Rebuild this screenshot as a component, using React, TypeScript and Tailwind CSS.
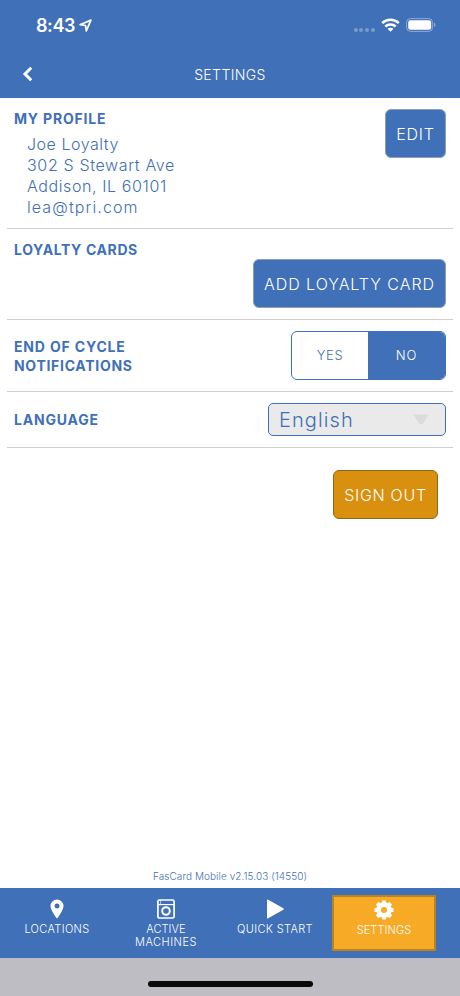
import type { ReactNode } from "react";

const profileLines = [
  { text: "Joe Loyalty", style: "tracking-[0.53px]" },
  { text: "302 S Stewart Ave", style: "tracking-[0.65px]" },
  { text: "Addison, IL 60101", style: "tracking-[0.6px]" },
  { text: "lea@tpri.com", style: "tracking-[1.1px]" },
];

function StatusBar() {
  return (
    <div className="flex h-[50px] items-center justify-between pl-9 pr-[24px] pt-px text-white">
      <div className="flex items-center gap-1">
        <span className="text-[18px] font-semibold leading-none tracking-[-0.4px]">8:43</span>
        <svg width="13" height="13" viewBox="0 0 13 13" fill="none" stroke="currentColor" strokeWidth="1.7" strokeLinejoin="round">
          <path d="M1.1 5.7L11.9 1.1L7.3 11.9L6.5 6.5Z" />
        </svg>
      </div>
      <div className="flex items-center">
        <div className="mr-[6px] mt-[9px] flex gap-[1.8px]">
          {[0, 1, 2, 3].map((dot) => (
            <span key={dot} className="size-[4px] rounded-full bg-white/30" />
          ))}
        </div>
        <svg className="mb-px mr-[6px]" width="19" height="14" viewBox="0 0 19 14" fill="none" stroke="currentColor" strokeWidth="2.6">
          <path d="M1.2 5.1C5.9 0.7 13.1 0.7 17.8 5.1" />
          <path d="M4.3 8.5C7.2 5.8 11.8 5.8 14.7 8.5" />
          <path d="M9.5 13.7L6.5 10.8C8.2 9.3 10.8 9.3 12.5 10.8Z" fill="currentColor" stroke="none" />
        </svg>
        <svg className="mb-px" width="30" height="14" viewBox="0 0 30 14">
          <rect x="0.6" y="0.6" width="26" height="12.8" rx="4" fill="none" stroke="white" strokeOpacity="0.4" />
          <rect x="2.2" y="2.2" width="23" height="9.6" rx="2.3" fill="white" />
          <path d="M28 4.8C29.9 5.4 29.9 8.6 28 9.2Z" fill="white" fillOpacity="0.4" />
        </svg>
      </div>
    </div>
  );
}

function NavItem({ icon, children, active }: { icon: ReactNode; children: ReactNode; active?: boolean }) {
  return (
    <div
      className={`flex h-[56px] w-[104px] flex-col items-center whitespace-nowrap text-center text-[11px] font-light leading-[13px] text-white ${
        active ? "border-2 border-[#b98420] bg-[#f7aa25] pt-[3px]" : "pt-1"
      }`}
    >
      <div className="mb-1 flex h-5 items-center">{icon}</div>
      {children}
    </div>
  );
}

export default function App() {
  return (
    <div className="flex h-[996px] w-[460px] flex-col overflow-hidden bg-white font-[Inter,sans-serif] text-[#4070b7]">
      <header className="h-[98px] bg-[#4070b7]">
        <StatusBar />
        <div className="grid h-12 grid-cols-[1fr_auto_1fr] items-center px-[22px] text-white">
          <svg width="11" height="16" viewBox="0 0 11 16" fill="none" stroke="currentColor" strokeWidth="3">
            <path d="M9.2 1.8L3 8L9.2 14.2" />
          </svg>
          <h1 className="text-[14px] font-light tracking-[0.4px]">SETTINGS</h1>
        </div>
      </header>

      <main className="flex flex-1 flex-col px-[7px]">
        {/* Profile */}
        <section className="flex h-[131px] justify-between border-b border-[#cfcfcf] px-[7px] pt-[11px]">
          <div>
            <h2 className="text-[14px] font-bold leading-5 tracking-[0.82px]">MY PROFILE</h2>
            <div className="ml-[13px] mt-[5px] text-[16px] font-light leading-[21px]">
              {profileLines.map((line) => (
                <div key={line.text} className={line.style}>
                  {line.text}
                </div>
              ))}
            </div>
          </div>
          <button className="h-[49px] w-[61px] rounded-md border border-[#8e9fb4] bg-[#4070b7] text-[16px] font-light tracking-[0.8px] text-white">
            EDIT
          </button>
        </section>

        {/* Loyalty cards */}
        <section className="flex h-[91px] flex-col border-b border-[#cfcfcf] px-[7px] pt-[11px]">
          <h2 className="text-[14px] font-bold leading-5 tracking-[0.62px]">LOYALTY CARDS</h2>
          <button className="-mt-px h-[49px] w-[193px] self-end whitespace-nowrap rounded-md border border-[#8e9fb4] bg-[#4070b7] text-[16px] font-light tracking-[0.96px] text-white">
            ADD LOYALTY CARD
          </button>
        </section>

        {/* End of cycle notifications */}
        <section className="flex h-[72px] items-center justify-between border-b border-[#cfcfcf] px-[7px]">
          <h2 className="text-[14px] font-bold leading-[19px]">
            <span className="tracking-[0.83px]">END OF CYCLE</span>
            <br />
            <span className="tracking-[0.7px]">NOTIFICATIONS</span>
          </h2>
          <div className="grid h-[49px] w-[155px] grid-cols-[76px_1fr] overflow-hidden rounded-md border border-[#4070b7] text-[13px] font-light">
            <button className="pt-px tracking-[0.6px]">YES</button>
            <button className="bg-[#4070b7] pt-px tracking-[1px] text-white">NO</button>
          </div>
        </section>

        {/* Language */}
        <section className="flex h-[56px] items-center justify-between border-b border-[#cfcfcf] px-[7px]">
          <h2 className="text-[14px] font-bold tracking-[0.8px]">LANGUAGE</h2>
          <button className="flex h-[33px] w-[178px] items-center justify-between rounded-[5px] border border-[#4070b7] bg-[#eaeaeb] pl-[10px] pr-4">
            <span className="text-[20px] font-light tracking-[1.1px]">English</span>
            <svg width="16" height="11" viewBox="0 0 16 11" fill="#dbdbdc">
              <path d="M0.5 0.5H15.5L10 9.5Q8 11 6 9.5Z" />
            </svg>
          </button>
        </section>

        <button className="mr-[15px] mt-[22px] h-[49px] w-[105px] self-end rounded-md border border-[#8c671c] bg-[#d8900e] text-[16px] font-light tracking-[0.7px] text-white">
          SIGN OUT
        </button>

        <p className="mb-1 mt-auto text-center text-[10px] font-light leading-4 tracking-[0.08px]">
          FasCard Mobile v2.15.03 (14550)
        </p>
      </main>

      <nav className="flex h-[70px] gap-[5px] bg-[#4070b7] pl-[5px] pt-[7px]">
        <NavItem
          icon={
            <svg width="14" height="20" viewBox="0 0 14 20" fill="currentColor" fillRule="evenodd">
              <path d="M7 0.5A6.5 6.5 0 0 0 0.5 7C0.5 11.5 7 19.5 7 19.5S13.5 11.5 13.5 7A6.5 6.5 0 0 0 7 0.5ZM7 4.5A2.5 2.5 0 1 1 7 9.5A2.5 2.5 0 0 1 7 4.5Z" />
            </svg>
          }
        >
          <span className="tracking-[0.35px]">LOCATIONS</span>
        </NavItem>
        <NavItem
          icon={
            <svg width="18" height="20" viewBox="0 0 18 20" fill="none" stroke="currentColor" strokeWidth="1.7">
              <rect x="0.9" y="1" width="16.2" height="18" rx="1.5" />
              <path d="M1 5.6H17" strokeWidth="1.2" />
              <path d="M3.6 1V5.4" strokeWidth="1" strokeOpacity="0.6" />
              <circle cx="9" cy="12" r="3.8" strokeWidth="2" />
            </svg>
          }
        >
          <span className="tracking-[0.1px]">ACTIVE</span>
          <span className="tracking-[0.5px]">MACHINES</span>
        </NavItem>
        <NavItem
          icon={
            <svg width="17" height="20" viewBox="0 0 17 20" fill="currentColor">
              <path d="M0 1.2Q0 0 1.2 0.7L16.3 9.2Q17.3 10 16.3 10.8L1.2 19.3Q0 20 0 18.8Z" />
            </svg>
          }
        >
          <span className="tracking-[0.35px]">QUICK START</span>
        </NavItem>
        <NavItem
          active
          icon={
            <svg width="20" height="20" viewBox="-10 -10 20 20" fill="none">
              <circle r="5.3" stroke="currentColor" strokeWidth="4.6" />
              {[0, 45, 90, 135, 180, 225, 270, 315].map((angle) => (
                <path key={angle} d="M-2.6 -6.5L-1.7 -9.6H1.7L2.6 -6.5Z" fill="currentColor" transform={`rotate(${angle})`} />
              ))}
            </svg>
          }
        >
          <span className="tracking-[0.1px]">SETTINGS</span>
        </NavItem>
      </nav>

      <footer className="flex h-[38px] justify-center bg-[#bebdc3] pt-[23px]">
        <div className="h-[6px] w-[165px] rounded-full bg-[#09090a]" />
      </footer>
    </div>
  );
}
